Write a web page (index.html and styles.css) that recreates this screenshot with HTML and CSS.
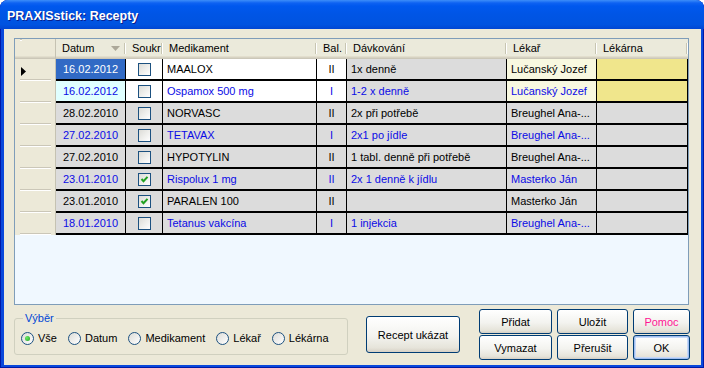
FILE: index.html
```html
<!DOCTYPE html>
<html lang="cs">
<head>
  <meta charset="UTF-8">
  <title>PRAXISstick: Recepty</title>
  <link rel="stylesheet" href="styles.css">
</head>
<body>

  <div class="window">
    <div class="titlebar">PRAXISstick: Recepty</div>

    <div class="content">
      <div class="grid" id="grid">
        <div class="hcell ind"></div>
        <div class="hcell">Datum
          <svg class="sort" width="9" height="5" viewBox="0 0 9 5"><polygon points="0,0 9,0 4.5,5" fill="#ACA899"/></svg>
        </div>
        <div class="hcell">Soukr</div>
        <div class="hcell">Medikament</div>
        <div class="hcell">Bal.</div>
        <div class="hcell">Dávkování</div>
        <div class="hcell">Lékař</div>
        <div class="hcell">Lékárna</div>
      </div>

      <div class="bottom">
        <fieldset class="group">
          <legend>Výběr</legend>
          <div class="radios">
            <label class="opt"><span class="radio on"></span>Vše</label>
            <label class="opt"><span class="radio"></span>Datum</label>
            <label class="opt"><span class="radio"></span>Medikament</label>
            <label class="opt"><span class="radio"></span>Lékař</label>
            <label class="opt"><span class="radio"></span>Lékárna</label>
          </div>
        </fieldset>

        <button class="btn big">Recept ukázat</button>

        <div class="buttons">
          <button class="btn">Přidat</button>
          <button class="btn">Uložit</button>
          <button class="btn help">Pomoc</button>
          <button class="btn">Vymazat</button>
          <button class="btn">Přerušit</button>
          <button class="btn ok">OK</button>
        </div>
      </div>
    </div>
  </div>

  <script>
    const recepty = [
      { datum: '16.02.2012', soukr: false, med: 'MAALOX', bal: 'II', davka: '1x denně', lekar: 'Lučanský Jozef', blue: false },
      { datum: '16.02.2012', soukr: false, med: 'Ospamox 500 mg', bal: 'I', davka: '1-2 x denně', lekar: 'Lučanský Jozef', blue: true },
      { datum: '28.02.2010', soukr: false, med: 'NORVASC', bal: 'II', davka: '2x při potřebě', lekar: 'Breughel Ana-...', blue: false },
      { datum: '27.02.2010', soukr: false, med: 'TETAVAX', bal: 'I', davka: '2x1 po jídle', lekar: 'Breughel Ana-...', blue: true },
      { datum: '27.02.2010', soukr: false, med: 'HYPOTYLIN', bal: 'II', davka: '1 tabl. denně při potřebě', lekar: 'Breughel Ana-...', blue: false },
      { datum: '23.01.2010', soukr: true, med: 'Rispolux 1 mg', bal: 'II', davka: '2x 1 denně k jídlu', lekar: 'Masterko Ján', blue: true },
      { datum: '23.01.2010', soukr: true, med: 'PARALEN 100', bal: 'II', davka: '', lekar: 'Masterko Ján', blue: false },
      { datum: '18.01.2010', soukr: false, med: 'Tetanus vakcína', bal: 'I', davka: '1 injekcia', lekar: 'Breughel Ana-...', blue: true }
    ];

    const check = '<svg width="11" height="11" viewBox="0 0 11 11"><polyline points="2.5,5 4.5,7.2 8.5,2.8" fill="none" stroke="#21A121" stroke-width="2"/></svg>';
    const arrow = '<svg width="5" height="9" viewBox="0 0 5 9"><polygon points="0,0 5,4.5 0,9" fill="#000"/></svg>';

    const grid = document.getElementById('grid');
    let html = '';
    recepty.forEach((r, i) => {
      const top = i < 2;
      const datumCls = i === 0 ? 'sel' : (i === 1 ? 'cyan' : '');
      const light = top ? 'white' : '';
      html += `<div class="row${r.blue ? ' blue' : ''}">
        <div class="ind">${i === 0 ? arrow : ''}</div>
        <div class="cell c ${datumCls}">${r.datum}</div>
        <div class="cell c ${light}"><span class="chk">${r.soukr ? check : ''}</span></div>
        <div class="cell ${light}">${r.med}</div>
        <div class="cell c ${light}">${r.bal}</div>
        <div class="cell">${r.davka}</div>
        <div class="cell ${top ? 'beige' : ''}">${r.lekar}</div>
        <div class="cell ${top ? 'khaki' : ''}"></div>
      </div>`;
    });
    grid.insertAdjacentHTML('beforeend', html);
  </script>

</body>
</html>
```

FILE: styles.css
```css
* {
  box-sizing: border-box;
}
body {
  margin: 0;
  background: #fff;
  font-family: 'Liberation Sans', Arial, sans-serif;
  font-size: 11px;
  color: #000;
}
.window {
  width: 704px;
  height: 368px;
  display: flex;
  flex-direction: column;
  background: #0A48DB;
  border-radius: 8px 8px 0 0;
  box-shadow: inset 1px 0 #0019A8, inset -1px 0 #0019A8, inset 0 -1px #0019A8;
  overflow: hidden;
}
.titlebar {
  height: 29px;
  flex: none;
  padding: 2px 7px 0;
  display: flex;
  align-items: center;
  color: #fff;
  font-weight: bold;
  font-size: 12.5px;
  text-shadow: 1px 1px #0A1E8C;
  background: linear-gradient(#3D8EF9 0, #0E62F2 3px, #0058EE 6px, #0055E5 50%, #0053E0 85%, #0146D2 100%);
}
.content {
  flex: 1;
  margin: 0 3px 3px 4px;
  background: #ECE9D8;
  padding: 9px 0 0 10px;
}

/* grid */
.grid {
  width: 675px;
  height: 267px;
  border: 1px solid #7F9DB9;
  background: #F0F8FF;
  display: grid;
  grid-template-columns: 41px 70px 37px 154px 30px 160px 90px 91px;
  grid-template-rows: 20px;
  grid-auto-rows: 22px;
  align-content: start;
}
.hcell {
  position: relative;
  background: #EBEADB;
  box-shadow: inset 0 -1px #CBC7B8, inset 0 -2px #D6D2C2, inset 0 -3px #E2DECD;
  padding: 0 0 2px 6px;
  display: flex;
  align-items: center;
  white-space: nowrap;
  overflow: hidden;
}
.hcell::after {
  content: '';
  position: absolute;
  right: 0;
  top: 4px;
  bottom: 5px;
  width: 2px;
  background: linear-gradient(to right, #C7C5B2 50%, #fff 50%);
}
.hcell.ind::after {
  top: 0;
  bottom: 0;
}
.sort {
  margin-left: auto;
  margin-right: 6px;
}
.row {
  display: contents;
}
.ind {
  position: relative;
  background: #ECE9D8;
  border-right: 1px solid #C5C2B2;
  padding: 3px 0 0 6px;
  display: flex;
  align-items: center;
}
.ind::after {
  content: '';
  position: absolute;
  left: 5px;
  right: 4px;
  bottom: 0;
  height: 2px;
  background: linear-gradient(#CBC7B8 50%, #fff 50%);
}
.cell {
  background: #DCDCDC;
  border-right: 1px solid #000;
  border-bottom: 2px solid #000;
  padding: 0 4px;
  display: flex;
  align-items: center;
  white-space: nowrap;
  overflow: hidden;
}
.cell.c {
  justify-content: center;
}
.row.blue .cell {
  color: #0B0BE6;
}
.cell.sel {
  background: #316AC5;
  color: #fff !important;
}
.cell.cyan {
  background: #E0FFFF;
}
.cell.white {
  background: #fff;
}
.cell.beige {
  background: #F8F8E0;
}
.cell.khaki {
  background: #F0E68C;
}
.chk {
  width: 13px;
  height: 13px;
  border: 1px solid #1C5180;
  background: linear-gradient(135deg, #DCDCD7, #fff);
  display: flex;
}

/* bottom */
.bottom {
  display: flex;
  align-items: flex-start;
}
.group {
  margin: 6px 0 0;
  width: 334px;
  border: 1px solid #D0D0BF;
  border-radius: 3px;
  padding: 7px 6px 9px;
  min-inline-size: 0;
}
.group legend {
  padding: 0 2px;
  margin-left: 2px;
  color: #0046D5;
  line-height: 14px;
}
.radios {
  display: flex;
  gap: 11px;
}
.opt {
  display: flex;
  align-items: center;
  gap: 4px;
  line-height: 13px;
}
.radio {
  position: relative;
  width: 13px;
  height: 13px;
  border: 1px solid #1C5180;
  border-radius: 50%;
  background: linear-gradient(135deg, #DCDCD7, #fff);
}
.radio.on::after {
  content: '';
  position: absolute;
  left: 3px;
  top: 3px;
  width: 5px;
  height: 5px;
  border-radius: 50%;
  background: radial-gradient(circle at 35% 35%, #6AEB66, #21A121);
}
.btn {
  font-family: inherit;
  font-size: 11px;
  font-weight: normal;
  color: #000;
  border: 1px solid #003C74;
  border-radius: 3px;
  background: linear-gradient(#fff, #F3F3EF 55%, #E6E4DA 88%, #D6D0C5);
  padding: 0;
}
.btn.big {
  width: 94px;
  height: 37px;
  margin: 11px 0 0 18px;
}
.buttons {
  margin: 4px 0 0 19px;
  display: grid;
  grid-template-columns: 73px 71px 57px;
  grid-template-rows: 25px 25px;
  column-gap: 5px;
  row-gap: 1px;
}
.btn.help {
  color: #FF1493;
}
.btn.ok {
  box-shadow: inset 0 0 0 1px #9FBEF0, inset 0 0 0 2px #C6D8F7;
}
```
